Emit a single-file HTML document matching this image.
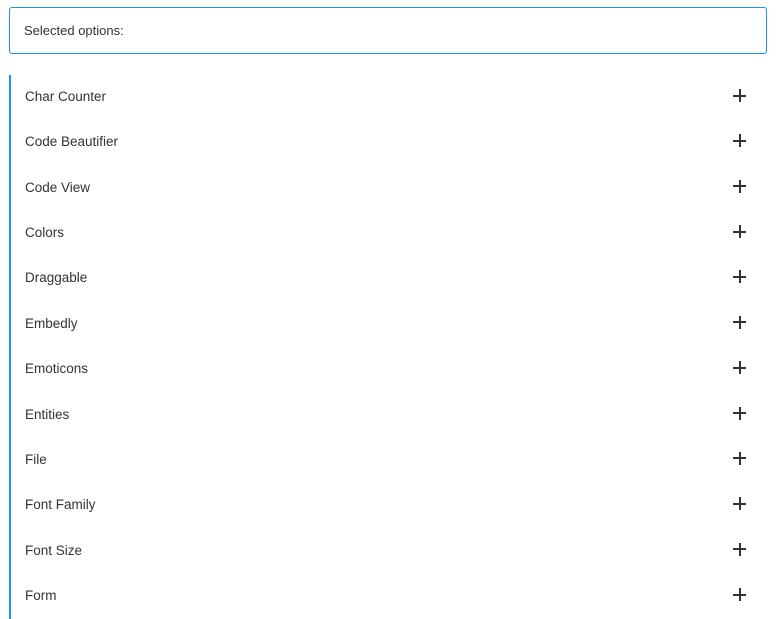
<!DOCTYPE html>
<html><head><style>
body{margin:0;background:#fff;font-family:"Liberation Sans",sans-serif;color:#333;width:776px;height:619px;overflow:hidden;position:relative}
.box{position:absolute;left:9px;top:7px;width:756px;height:45px;border:1px solid #1e90e8;border-radius:3px;font-size:13px;line-height:45px;box-sizing:content-box}
.box span{margin-left:14px}
.bar{position:absolute;left:9px;top:75px;width:2px;height:544px;background:#1e90e8}
.row{position:absolute;left:25px;width:730px;height:20px;line-height:20px;font-size:13.5px}
.plus{position:absolute;left:708px;top:2px;width:13px;height:13px}
.plus:before{content:"";position:absolute;left:0;top:5.5px;width:13px;height:2px;background:#333}
.plus:after{content:"";position:absolute;left:5.5px;top:0;width:2px;height:13px;background:#333}
</style></head><body>
<div class="box"><span>Selected options:</span></div>
<div class="bar"></div>
<div class="row" style="top:87px">Char Counter<i class="plus"></i></div>
<div class="row" style="top:132.4px">Code Beautifier<i class="plus"></i></div>
<div class="row" style="top:177.7px">Code View<i class="plus"></i></div>
<div class="row" style="top:223.1px">Colors<i class="plus"></i></div>
<div class="row" style="top:268.4px">Draggable<i class="plus"></i></div>
<div class="row" style="top:313.8px">Embedly<i class="plus"></i></div>
<div class="row" style="top:359.2px">Emoticons<i class="plus"></i></div>
<div class="row" style="top:404.5px">Entities<i class="plus"></i></div>
<div class="row" style="top:449.9px">File<i class="plus"></i></div>
<div class="row" style="top:495.2px">Font Family<i class="plus"></i></div>
<div class="row" style="top:540.6px">Font Size<i class="plus"></i></div>
<div class="row" style="top:586px">Form<i class="plus"></i></div>
</body></html>
